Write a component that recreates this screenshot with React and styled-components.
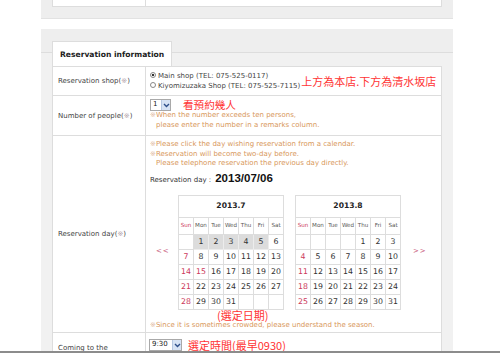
import React from "react";
import styled, { createGlobalStyle } from "styled-components";

const GlobalStyle = createGlobalStyle`
  *, *::before, *::after {
    box-sizing: border-box;
  }
  body {
    margin: 0;
    background: #fff;
    font-family: "DejaVu Sans", Verdana, sans-serif;
    color: #333;
  }
`;

const Page = styled.div`
  width: 412px;
  margin-left: 41px;
`;

const TopPanel = styled.div`
  background: #eee;
  padding: 0 11px 11px;
  border-bottom: 1px solid #e2e2e2;
`;

const TopTable = styled.div`
  display: grid;
  grid-template-columns: 93px 1fr;
  height: 7px;
  background: #fff;
  border: 1px solid #ddd;
  border-top: none;

  div:first-child {
    border-right: 1px solid #ddd;
  }
`;

const Panel = styled.div`
  margin-top: 10px;
  padding: 12px 11px 0;
  background: linear-gradient(
    #eee 23px,
    #ddd 23px,
    #ddd 24px,
    #f1f1f1 24px
  );
`;

const Tab = styled.div`
  display: inline-flex;
  align-items: center;
  height: 25px;
  padding: 0 7px;
  background: #fff;
  border: 1px solid #ddd;
  border-bottom: none;
  font-size: 7.6px;
  font-weight: 700;
  color: #222;
`;

const Table = styled.div`
  background: #fff;
  border: 1px solid #ddd;
  border-bottom: none;
`;

const Row = styled.div`
  display: grid;
  grid-template-columns: 93px 1fr;
  height: ${(p) => p.h}px;
  border-bottom: 1px solid #ddd;
`;

const Label = styled.div`
  display: flex;
  align-items: center;
  padding: 0 5px;
  border-right: 1px solid #ddd;
  font-size: 7px;
  line-height: 10px;
  color: #444;
  white-space: ${(p) => (p.wrap ? "normal" : "nowrap")};

  em {
    font-style: normal;
    color: #b0a0a8;
  }
`;

const Cell = styled.div`
  padding: ${(p) => p.pad || "0 0 0 4px"};
  display: flex;
  flex-direction: column;
  justify-content: ${(p) => (p.center ? "center" : "flex-start")};
  font-size: 7px;
  line-height: 9.5px;
  overflow: hidden;
`;

const Line = styled.div`
  display: flex;
  align-items: center;
  gap: ${(p) => p.gap || 0}px;
`;

const RadioList = styled.div`
  display: flex;
  flex-direction: column;
  color: #444;
  line-height: 10px;
`;

const RadioItem = styled.label`
  display: flex;
  align-items: center;
  gap: 2px;
  white-space: nowrap;
`;

const Radio = styled.span`
  width: 6px;
  height: 6px;
  border-radius: 50%;
  border: 1px solid #888;
  margin-top: -3px;
  background: ${(p) => (p.on ? "radial-gradient(#333 1.2px, #fff 1.6px)" : "#fff")};
`;

const RedNote = styled.span`
  font-family: "Noto Sans CJK TC", "Noto Sans CJK SC", sans-serif;
  font-size: ${(p) => p.size || 11}px;
  line-height: ${(p) => p.lh || 12}px;
  color: #ff3434;
  white-space: nowrap;
  margin-left: ${(p) => p.ml || 0}px;
`;

const Note = styled.div`
  color: #d8975a;
  white-space: nowrap;
  padding-left: ${(p) => (p.indent ? 6 : 0)}px;
  margin-top: ${(p) => p.mt || 0}px;

  &::before {
    content: "${(p) => (p.indent ? "" : "※")}";
    color: #e0b9a0;
  }
`;

const SelectBox = styled.div`
  display: inline-flex;
  align-items: stretch;
  width: ${(p) => p.w}px;
  height: 12px;
  border: 1px solid #a9a9a9;
  background: #fff;
  font-size: 7px;
  color: #222;

  span {
    flex: 1;
    display: flex;
    align-items: center;
    padding-left: 2px;
  }

  i {
    width: 9px;
    display: flex;
    align-items: center;
    justify-content: center;
    background: #d7e3f4;
    border-left: 1px solid #b6c8e2;
  }
`;

const DayLine = styled.div`
  display: flex;
  align-items: baseline;
  gap: 4px;
  margin-top: 3px;
  color: #333;
  font-size: 7px;
  line-height: 13px;

  b {
    font-family: "Liberation Sans", Arial, sans-serif;
    font-size: 11.5px;
    color: #111;
  }
`;

const CalRow = styled.div`
  display: flex;
  align-items: center;
  margin-top: 8px;
  padding-left: 6px;
`;

const Arrow = styled.span`
  width: ${(p) => p.w}px;
  font-size: 7px;
  color: #c8587a;
  letter-spacing: 1px;
`;

const Calendar = styled.div`
  width: 106px;
  border: 1px solid #ddd;
  border-right: none;
  border-bottom: none;
  margin-right: ${(p) => p.mr || 0}px;
`;

const CalTitle = styled.div`
  height: 22px;
  display: flex;
  align-items: center;
  justify-content: center;
  font-size: 7.6px;
  font-weight: 700;
  color: #222;
  border-right: 1px solid #ddd;
  border-bottom: 1px solid #ddd;
`;

const CalGrid = styled.div`
  display: grid;
  grid-template-columns: repeat(7, 15px);
  grid-template-rows: 17px repeat(5, 15px);
`;

const CalCell = styled.div`
  display: flex;
  align-items: center;
  justify-content: center;
  border-right: 1px solid #ddd;
  border-bottom: 1px solid #ddd;
  font-size: ${(p) => (p.head ? 5.6 : 7.8)}px;
  color: ${(p) => (p.red ? "#cc3a5c" : p.head ? "#555" : "#333")};
  background: ${(p) => (p.sel ? "#dcdcdc" : "#fff")};
  ${(p) => p.sel && "border-color: #ececec;"}
`;

const BottomBar = styled.div`
  position: fixed;
  left: 0;
  right: 0;
  bottom: 0;
  height: 2px;
  background: #8c8c8c;
`;

const Chevron = () => (
  <svg width="7" height="5" viewBox="0 0 7 5">
    <path d="M1 1 L3.5 3.5 L6 1" fill="none" stroke="#30508a" strokeWidth="1.4" />
  </svg>
);

const HEAD = ["Sun", "Mon", "Tue", "Wed", "Thu", "Fri", "Sat"];

const Month = ({ title, start, days, holidays = [], selected = [], mr }) => {
  const cells = [];
  for (let i = 0; i < 35; i++) {
    const d = i - start + 1;
    cells.push(d >= 1 && d <= days ? d : null);
  }
  return (
    <Calendar mr={mr}>
      <CalTitle>{title}</CalTitle>
      <CalGrid>
        {HEAD.map((h, i) => (
          <CalCell key={h} head red={i === 0}>
            {h}
          </CalCell>
        ))}
        {cells.map((d, i) => (
          <CalCell
            key={i}
            red={d && (i % 7 === 0 || holidays.includes(d))}
            sel={selected.includes(d)}
          >
            {d}
          </CalCell>
        ))}
      </CalGrid>
    </Calendar>
  );
};

export default function App() {
  return (
    <>
      <GlobalStyle />
      <Page>
        <TopPanel>
          <TopTable>
            <div />
            <div />
          </TopTable>
        </TopPanel>

        <Panel>
          <Tab>Reservation information</Tab>
          <Table>
            <Row h={29}>
              <Label>
                <span>
                  Reservation shop(<em>※</em>)
                </span>
              </Label>
              <Cell pad="0 0 0 4px" center>
                <Line>
                  <RadioList>
                    <RadioItem>
                      <Radio on /> Main shop (TEL: 075-525-0117)
                    </RadioItem>
                    <RadioItem>
                      <Radio /> Kiyomizuzaka Shop (TEL: 075-525-7115)
                    </RadioItem>
                  </RadioList>
                  <RedNote size={11} ml={1}>
                    上方為本店.下方為清水坂店
                  </RedNote>
                </Line>
              </Cell>
            </Row>

            <Row h={40}>
              <Label>
                <span>
                  Number of people(<em>※</em>)
                </span>
              </Label>
              <Cell pad="3px 0 0 4px">
                <Line gap={12}>
                  <SelectBox w={21}>
                    <span>1</span>
                    <i>
                      <Chevron />
                    </i>
                  </SelectBox>
                  <RedNote size={10.6}>看預約幾人</RedNote>
                </Line>
                <Note>When the number exceeds ten persons,</Note>
                <Note indent>please enter the number in a remarks column.</Note>
              </Cell>
            </Row>

            <Row h={197}>
              <Label>
                <span>
                  Reservation day(<em>※</em>)
                </span>
              </Label>
              <Cell pad="4px 0 0 4px">
                <Note>Please click the day wishing reservation from a calendar.</Note>
                <Note>Reservation will become two-day before.</Note>
                <Note indent>Please telephone reservation the previous day directly.</Note>
                <DayLine>
                  Reservation day : <b>2013/07/06</b>
                </DayLine>
                <CalRow>
                  <Arrow w={22}>&lt;&lt;</Arrow>
                  <Month
                    title="2013.7"
                    start={1}
                    days={31}
                    holidays={[15]}
                    selected={[1, 2, 3, 4, 5]}
                    mr={11}
                  />
                  <Month title="2013.8" start={4} days={31} mr={12} />
                  <Arrow w={14}>&gt;&gt;</Arrow>
                </CalRow>
                <RedNote size={11} lh={11} ml={67}>
                  (選定日期)
                </RedNote>
                <Note>Since it is sometimes crowded, please understand the season.</Note>
              </Cell>
            </Row>

            <Row h={40}>
              <Label wrap>
                <span>
                  Coming to the restaurant time(<em>※</em>)
                </span>
              </Label>
              <Cell pad="6px 0 0 3px">
                <Line gap={6}>
                  <SelectBox w={33}>
                    <span>9:30</span>
                    <i>
                      <Chevron />
                    </i>
                  </SelectBox>
                  <RedNote size={11}>選定時間(最早0930)</RedNote>
                </Line>
                <Note>A time may be changed by the reservation situation.</Note>
              </Cell>
            </Row>
          </Table>
        </Panel>
      </Page>
      <BottomBar />
    </>
  );
}
